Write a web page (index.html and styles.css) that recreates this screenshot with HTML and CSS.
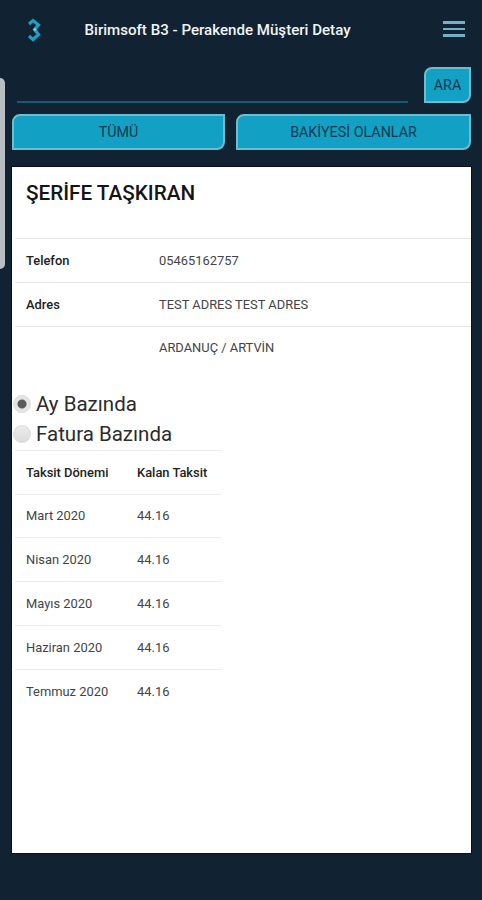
FILE: index.html
```html
<!DOCTYPE html>
<html lang="tr">
<head>
  <meta charset="UTF-8">
  <meta name="viewport" content="width=device-width, initial-scale=1.0">
  <title>Birimsoft B3</title>
  <link rel="stylesheet" href="styles.css">
</head>
<body>
  <div class="drawer-handle"></div>

  <header class="header">
    <svg class="logo" width="14" height="28" viewBox="0 0 14 28">
      <path d="M2 8L6 4.5L11.5 9L7.5 13.5L11.5 18.5L6 23.5L2 20" fill="none" stroke="#1c9fc2" stroke-width="3.2"/>
      <circle cx="8" cy="13.5" r="1.3" fill="#9bd3e0"/>
    </svg>
    <h1>Birimsoft B3 - Perakende Müşteri Detay</h1>
    <button class="menu-btn" aria-label="Menü"><span></span><span></span><span></span></button>
  </header>

  <div class="search">
    <input type="text" class="search-input" aria-label="Ara">
    <button class="btn">ARA</button>
  </div>

  <div class="filters">
    <button class="btn">TÜMÜ</button>
    <button class="btn">BAKİYESİ OLANLAR</button>
  </div>

  <main class="card">
    <h2>ŞERİFE TAŞKIRAN</h2>

    <table class="info">
      <tr><th>Telefon</th><td>05465162757</td></tr>
      <tr><th>Adres</th><td>TEST ADRES TEST ADRES</td></tr>
      <tr><th></th><td>ARDANUÇ / ARTVİN</td></tr>
    </table>

    <div class="options">
      <label><input type="radio" name="mode" checked><span>Ay Bazında</span></label>
      <label><input type="radio" name="mode"><span>Fatura Bazında</span></label>
    </div>

    <table class="installments">
      <tr><th>Taksit Dönemi</th><th>Kalan Taksit</th></tr>
      <tr><td>Mart 2020</td><td>44.16</td></tr>
      <tr><td>Nisan 2020</td><td>44.16</td></tr>
      <tr><td>Mayıs 2020</td><td>44.16</td></tr>
      <tr><td>Haziran 2020</td><td>44.16</td></tr>
      <tr><td>Temmuz 2020</td><td>44.16</td></tr>
    </table>
  </main>
</body>
</html>
```
FILE: styles.css
```css
* {
  box-sizing: border-box;
}

body {
  margin: 0;
  height: 900px;
  overflow: hidden;
  background-color: #112232;
  font-family: Roboto, sans-serif;
  color: #222;
}

.drawer-handle {
  position: absolute;
  left: 0;
  top: 78px;
  width: 5px;
  height: 191px;
  background-color: #b9bec2;
  border-radius: 0 5px 5px 0;
}

.header {
  display: flex;
  align-items: center;
  height: 60px;
  padding: 0 17px 0 27px;
}

.logo {
  margin-right: 43.5px;
}

.header h1 {
  flex: 1;
  margin: 0;
  font-size: 15.1px;
  font-weight: 500;
  color: #f2f4f5;
  white-space: nowrap;
}

.menu-btn {
  display: flex;
  flex-direction: column;
  gap: 4px;
  width: 22px;
  padding: 0;
  margin-bottom: 2px;
  border: none;
  background: none;
}

.menu-btn span {
  height: 2.5px;
  background-color: #72b1c3;
}

.search {
  display: flex;
  gap: 16px;
  padding: 7px 11px 0 17px;
}

.search-input {
  flex: 1;
  min-width: 0;
  height: 36px;
  border: none;
  border-bottom: 2px solid #175a76;
  background: none;
  color: #fff;
}

.btn {
  height: 36px;
  padding: 0;
  border: 2px solid #6bbdd0;
  border-radius: 8px 0;
  background-color: #12a0c4;
  font-family: inherit;
  font-size: 14.3px;
  color: #12384f;
}

.search .btn {
  width: 47px;
}

.filters {
  display: grid;
  grid-template-columns: 213px 235px;
  gap: 11px;
  padding: 11px 11px 0 12px;
}

.card {
  height: 686px;
  margin: 17px 11px 0 12px;
  padding: 0 0 0 3px;
  background-color: #fff;
  box-shadow: 0 0 0 1px #080d2c;
}

.card h2 {
  height: 71px;
  margin: 0;
  padding: 14px 0 0 11px;
  font-size: 20.7px;
  line-height: 24px;
  font-weight: 500;
  color: #151515;
}

table {
  border-collapse: separate;
  border-spacing: 0;
  font-size: 12.9px;
}

th, td {
  height: 43.8px;
  padding: 0 0 0 11px;
  border-top: 1px solid #e6e6e6;
  text-align: left;
  font-weight: 400;
  color: #444;
}

th {
  font-weight: 500;
  color: #222;
}

.info {
  width: 100%;
}

.info th {
  width: 133px;
}

.options {
  margin: 19px 0 0 -3px;
}

.options label {
  display: flex;
  align-items: center;
  height: 30.7px;
  font-size: 20.5px;
  color: #2b2b2b;
}

.options input {
  appearance: none;
  width: 18px;
  height: 18px;
  margin: 0 5px 0 1px;
  border: 1px solid #dcdcdc;
  border-radius: 50%;
  background: linear-gradient(#ececec, #dcdcdc);
}

.options input:checked {
  background: radial-gradient(circle, #5a5a5a 4px, #e4e4e4 5px);
}

.installments {
  width: 206px;
}

.installments th,
.installments td {
  border-top-color: #ebebeb;
}

.installments th:first-child {
  width: 111px;
}
```
